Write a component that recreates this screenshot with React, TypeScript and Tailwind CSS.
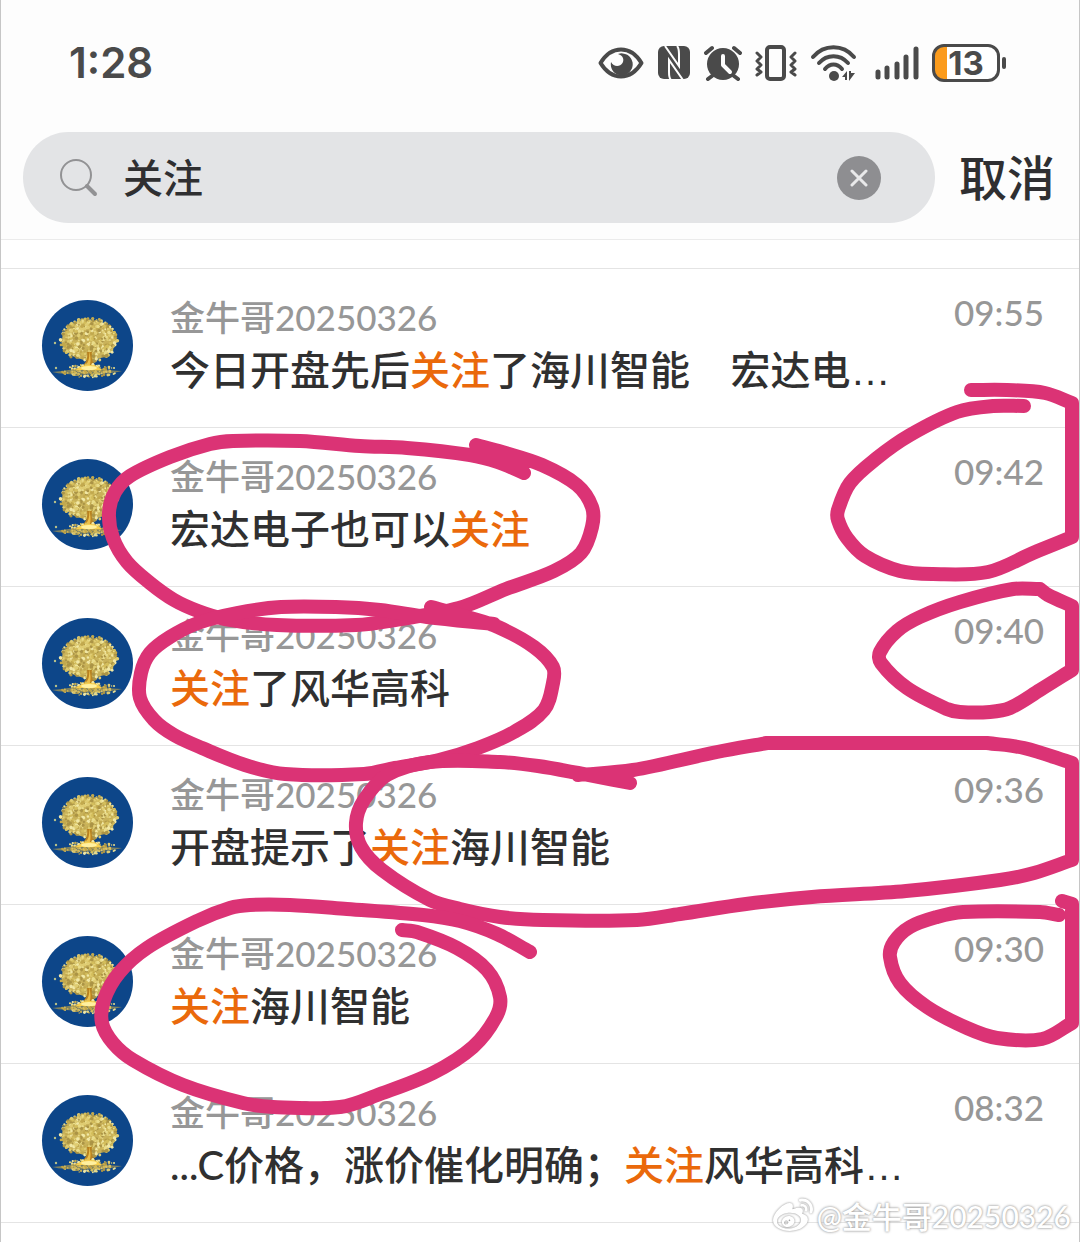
import React from 'react';
import { FaWeibo } from 'react-icons/fa';

interface Message {
  time: string;
  parts: string[];
  clipped?: boolean;
}

interface Dot {
  x: number;
  y: number;
  r: number;
  color: string;
}

const KEYWORD = '关注';
const AUTHOR = '金牛哥20250326';

const messages: Message[] = [
  { time: '09:55', parts: ['今日开盘先后', KEYWORD, '了海川智能    宏达电'], clipped: true },
  { time: '09:42', parts: ['宏达电子也可以', KEYWORD] },
  { time: '09:40', parts: [KEYWORD, '了风华高科'] },
  { time: '09:36', parts: ['开盘提示了', KEYWORD, '海川智能'] },
  { time: '09:30', parts: [KEYWORD, '海川智能'] },
  { time: '08:32', parts: ['...C价格，涨价催化明确；', KEYWORD, '风华高科'], clipped: true },
];

// Freehand pen marks; a repeated point keeps a hard corner
const penMarks: number[][][] = [
  [[524, 473], [498, 462], [470, 455], [407, 448], [360, 446], [300, 441], [233, 441], [210, 444], [170, 457], [130, 476], [115, 492], [109, 513], [113, 538], [127, 562], [150, 583], [174, 600], [198, 611], [225, 619], [277, 625], [356, 625], [395, 620], [459, 608], [506, 589], [554, 571], [581, 553], [592, 527], [592, 507], [577, 485], [542, 465], [502, 452], [476, 445]],
  [[494, 624], [427, 617], [380, 610], [336, 607], [281, 607], [237, 613], [198, 623], [170, 637], [150, 653], [141, 673], [140, 698], [154, 720], [174, 735], [202, 748], [245, 765], [285, 774], [364, 774], [395, 768], [439, 760], [478, 748], [514, 732], [544, 710], [553, 683], [553, 667], [534, 647], [498, 627], [467, 617], [431, 607]],
  [[971, 390], [1007, 390], [1045, 393], [1072, 403], [1072, 403], [1072, 537], [1072, 537], [1033, 553], [988, 572], [933, 574], [900, 571], [865, 556], [847, 538], [838, 520], [838, 510], [850, 483], [877, 458], [910, 435], [957, 412], [993, 406], [1024, 406]],
  [[1040, 589], [1048, 595], [1072, 606], [1072, 606], [1072, 670], [1072, 670], [1040, 690], [1010, 708], [990, 712], [960, 712], [947, 709], [907, 688], [881, 663], [880, 652], [897, 631], [920, 617], [960, 602], [1013, 589], [1040, 589]],
  [[630, 783], [578, 773], [538, 766], [500, 762], [430, 762], [387, 775], [364, 800], [356, 823], [361, 847], [382, 870], [430, 900], [460, 909], [500, 917], [543, 920], [637, 920], [680, 914], [746, 904], [812, 897], [906, 891], [1000, 880], [1034, 873], [1072, 860], [1072, 860], [1072, 763], [1072, 763], [1024, 748], [987, 743], [987, 743], [767, 743], [767, 743], [717, 752], [633, 770], [578, 775]],
  [[530, 952], [497, 934], [460, 921], [423, 915], [347, 909], [290, 905], [250, 905], [230, 908], [197, 921], [147, 948], [119, 973], [104, 1000], [102, 1023], [113, 1043], [133, 1060], [183, 1085], [243, 1103], [273, 1107], [340, 1107], [380, 1094], [433, 1073], [473, 1047], [496, 1017], [500, 997], [487, 970], [457, 948], [417, 932], [402, 930]],
  [[1059, 915], [1040, 912], [963, 912], [937, 917], [910, 927], [894, 942], [890, 957], [900, 983], [927, 1007], [967, 1028], [997, 1038], [1042, 1039], [1072, 1023], [1072, 1023], [1072, 904], [1072, 904], [1062, 901]],
];

// Smooth path through the points, handles scaled by segment length
const toPath = (pts: number[][]): string => {
  const tangent = (i: number): number[] => {
    const a = pts[Math.max(0, i - 1)];
    const b = pts[Math.min(pts.length - 1, i + 1)];
    const len = Math.hypot(b[0] - a[0], b[1] - a[1]) || 1;
    return [(b[0] - a[0]) / len, (b[1] - a[1]) / len];
  };
  return pts.slice(1).reduce((d, p, i) => {
    const q = pts[i];
    const h = Math.hypot(p[0] - q[0], p[1] - q[1]) / 3;
    const t0 = tangent(i);
    const t1 = tangent(i + 1);
    return `${d} C${q[0] + t0[0] * h} ${q[1] + t0[1] * h} ${p[0] - t1[0] * h} ${p[1] - t1[1] * h} ${p[0]} ${p[1]}`;
  }, `M${pts[0][0]} ${pts[0][1]}`);
};

let seed = 7;
const rand = () => {
  seed = (seed * 16807) % 2147483647;
  return seed / 2147483647;
};

const golds = ['#e9dc8a', '#d4be5c', '#f1e8a6', '#c2a94e', '#dfcc72', '#ab9446'];

const leaves: Dot[] = Array.from({ length: 460 }, () => {
  const a = rand() * Math.PI * 2;
  const k = Math.sqrt(rand());
  return {
    x: 47 + Math.cos(a) * k * 29,
    y: 40 + Math.sin(a) * k * 22,
    r: 0.8 + rand() * 1.1,
    color: golds[Math.floor(rand() * golds.length)],
  };
});

const ground: Dot[] = Array.from({ length: 150 }, () => {
  const s = rand() + rand() + rand() - 1.5;
  return {
    x: 46 + s * 25,
    y: 71 + (rand() - 0.5) * (15 - Math.abs(s) * 8),
    r: 0.6 + rand() * 0.9,
    color: golds[Math.floor(rand() * golds.length)],
  };
});

const Avatar: React.FC = () => (
  <svg viewBox="0 0 91 91" className="size-[91px] shrink-0 rounded-full bg-[#0d4689]" aria-hidden="true">
    <ellipse cx="47" cy="40" rx="27" ry="20" fill="#c9b25a" />
    {leaves.map((d, i) => (
      <circle key={i} cx={d.x} cy={d.y} r={d.r} fill={d.color} />
    ))}
    <path d="M45 52h5c-1 6 0 10 5 15h-16c5-4 7-8 6-15z" fill="#b98220" />
    <path d="M47 51c1 8-1 12-5 16h5c2-4 2-10 0-16z" fill="#ecc04a" />
    {ground.map((d, i) => (
      <circle key={i} cx={d.x} cy={d.y} r={d.r} fill={d.color} />
    ))}
    <path d="M10 72c14-1 26-4 36-6 10 2 22 5 34 5-13 4-54 5-70 1z" fill="#c8a845" opacity="0.6" />
    <path d="M34 70c4-4 8-5 13-5s9 1 13 5z" fill="#f7cf4e" />
    <ellipse cx="47" cy="68" rx="8" ry="2" fill="#fff0a0" />
    <circle cx="13" cy="43" r="1.2" fill="#b9c28a" />
    <circle cx="14" cy="68" r="1.2" fill="#b9c28a" />
  </svg>
);

const StatusBar: React.FC = () => (
  <div className="flex h-[126px] items-center justify-between pl-[68px] pr-[71px] text-[#4a4a4a]">
    <span className="font-[Inter] text-[42px] font-semibold leading-none">1:28</span>
    <div className="flex items-center">
      <svg width="46" height="34" viewBox="0 0 46 34" className="mr-3.5" fill="none" aria-hidden="true">
        <path d="M2.500 17C8 8 15 3.500 23 3.500S38 8 43.500 17C38 26 31 30.500 23 30.500S8 26 2.500 17z" stroke="currentColor" strokeWidth="4" strokeLinejoin="round" />
        <path d="M20 8a11 11 0 1 1-7 8c2.500 5 9 5 11.500 1 2-3.500.5-7.500-4.500-9z" fill="currentColor" />
      </svg>
      <svg width="32" height="34" viewBox="0 0 32 34" className="mr-3.5" fill="none" aria-hidden="true">
        <rect width="32" height="33" rx="6" fill="currentColor" />
        <path d="M7 0l14 20V8c0-4 0-6-2-8M25 34L11 14v12c0 4 0 6 2 8" stroke="#fdfdfd" strokeWidth="2" />
      </svg>
      <svg width="38" height="36" viewBox="0 0 38 36" className="mr-3" fill="none" aria-hidden="true">
        <circle cx="19" cy="19" r="16" fill="currentColor" />
        <path d="M2 8l6-5M36 8l-6-5M8 31l-4 3M30 31l4 3" stroke="currentColor" strokeWidth="4" strokeLinecap="round" />
        <path d="M19 11v9l7 7" stroke="#fdfdfd" strokeWidth="4" strokeLinecap="round" strokeLinejoin="round" />
      </svg>
      <svg width="44" height="36" viewBox="0 0 44 36" className="mr-3" fill="none" stroke="currentColor" aria-hidden="true">
        <rect x="13" y="2" width="17" height="32" rx="3" strokeWidth="4" />
        <path d="M3 8l4 4-4 4 4 4-4 4 4 3-4 3M41 8l-4 4 4 4-4 4 4 4-4 3 4 3" strokeWidth="3" strokeLinecap="round" strokeLinejoin="round" />
      </svg>
      <svg width="48" height="36" viewBox="0 0 48 36" className="mr-4" fill="none" aria-hidden="true">
        <path d="M3 12C14-1 33-1 44 12M9 18c8-9 21-9 29 0M15 24c5-6 12-6 17 0" stroke="currentColor" strokeWidth="4" strokeLinecap="round" />
        <circle cx="24" cy="31" r="5" fill="currentColor" />
        <path d="M37 26v9h-2v-3h-3zM39 26h2v2h4l-6 8z" fill="currentColor" />
      </svg>
      <svg width="46" height="36" viewBox="0 0 46 36" className="mr-3" stroke="currentColor" strokeWidth="5" strokeLinecap="round" aria-hidden="true">
        <path d="M4 27v5M13 23v9M23 19v13M32 12v20M42 4v28" />
      </svg>
      <div className="flex h-[38px] w-[68px] items-center justify-center rounded-xl border-3 border-[#4a4a4a] bg-linear-to-r from-[#fb9b1c] from-20% to-white to-20%">
        <span className="font-[Inter] text-[33px] font-bold leading-none">13</span>
      </div>
      <span className="ml-0.5 mr-0.5 h-3 w-1 rounded-full bg-[#4a4a4a]" />
    </div>
  </div>
);

const SearchBar: React.FC = () => (
  <form className="flex items-center pb-4 pl-[22px] pr-6 pt-1.5" onSubmit={(e) => e.preventDefault()}>
    <div className="flex h-[91px] flex-1 items-center rounded-full bg-[#e3e4e6] pl-9 pr-[54px]">
      <svg width="40" height="40" viewBox="0 0 40 40" className="mr-6 shrink-0" fill="none" stroke="#929294" aria-hidden="true">
        <circle cx="17" cy="17" r="15" strokeWidth="2" />
        <path d="M28 28l8 8" strokeWidth="4" strokeLinecap="round" />
      </svg>
      <input
        type="text"
        aria-label="搜索"
        defaultValue={KEYWORD}
        className="min-w-0 flex-1 bg-transparent text-[40px] leading-[52px] text-[#2f2f31] outline-none"
      />
      <button type="button" aria-label="清除" className="flex size-11 items-center justify-center rounded-full bg-[#8e8e91]">
        <svg width="18" height="18" viewBox="0 0 18 18" stroke="#e9e9ea" strokeWidth="3" strokeLinecap="round" aria-hidden="true">
          <path d="M2 2l14 14M16 2L2 16" />
        </svg>
      </button>
    </div>
    <button type="button" className="ml-6 text-5xl text-[#2f2f31]">取消</button>
  </form>
);

const MessageRow: React.FC<{ message: Message }> = ({ message }) => (
  <li className="flex h-[159px] border-t border-[#e4e4e4] pl-[41px] pr-[35px]">
    <div className="pt-[31px]">
      <Avatar />
    </div>
    <div className="ml-[37px] min-w-0 flex-1 pt-[22px]">
      <div className="text-[35px] leading-[52px] text-[#979797]">{AUTHOR}</div>
      <p className="whitespace-pre text-[40px] leading-[54px] text-[#303030]">
        {message.parts.map((part, i) => (
          <span key={i} className={part === KEYWORD ? 'text-[#ea690b]' : undefined}>{part}</span>
        ))}
        {message.clipped && <span className="font-['Liberation_Sans']">…</span>}
      </p>
    </div>
    <time className="pt-[23px] text-[35px] leading-10 text-[#979797]">{message.time}</time>
  </li>
);

export default function App() {
  return (
    <div className="relative min-h-screen overflow-hidden border-x border-[#c6c6c6] bg-white font-[Lato,'Noto_Sans_CJK_SC',sans-serif] font-medium">
      <header className="border-b border-[#ebebeb] bg-[#fdfdfd]">
        <StatusBar />
        <SearchBar />
      </header>

      <ul className="mt-7 border-b border-[#e4e4e4]">
        {messages.map((message) => (
          <MessageRow key={message.time} message={message} />
        ))}
      </ul>

      {/* Pen marks drawn over the list */}
      <svg
        viewBox="1 0 1078 1242"
        className="pointer-events-none absolute left-0 top-0 h-auto w-full"
        fill="none"
        stroke="#db3375"
        strokeWidth="14"
        strokeLinecap="round"
        strokeLinejoin="round"
        aria-hidden="true"
      >
        {penMarks.map((pts, i) => (
          <path key={i} d={toPath(pts)} />
        ))}
      </svg>

      <div className="absolute bottom-1.5 right-2 flex items-center gap-1 text-[30px] leading-10 text-white [text-shadow:0_0_3px_#999,0_0_2px_#bbb]">
        <FaWeibo className="size-10 drop-shadow-[0_0_1px_#888]" />
        <span>@{AUTHOR}</span>
      </div>
    </div>
  );
}
